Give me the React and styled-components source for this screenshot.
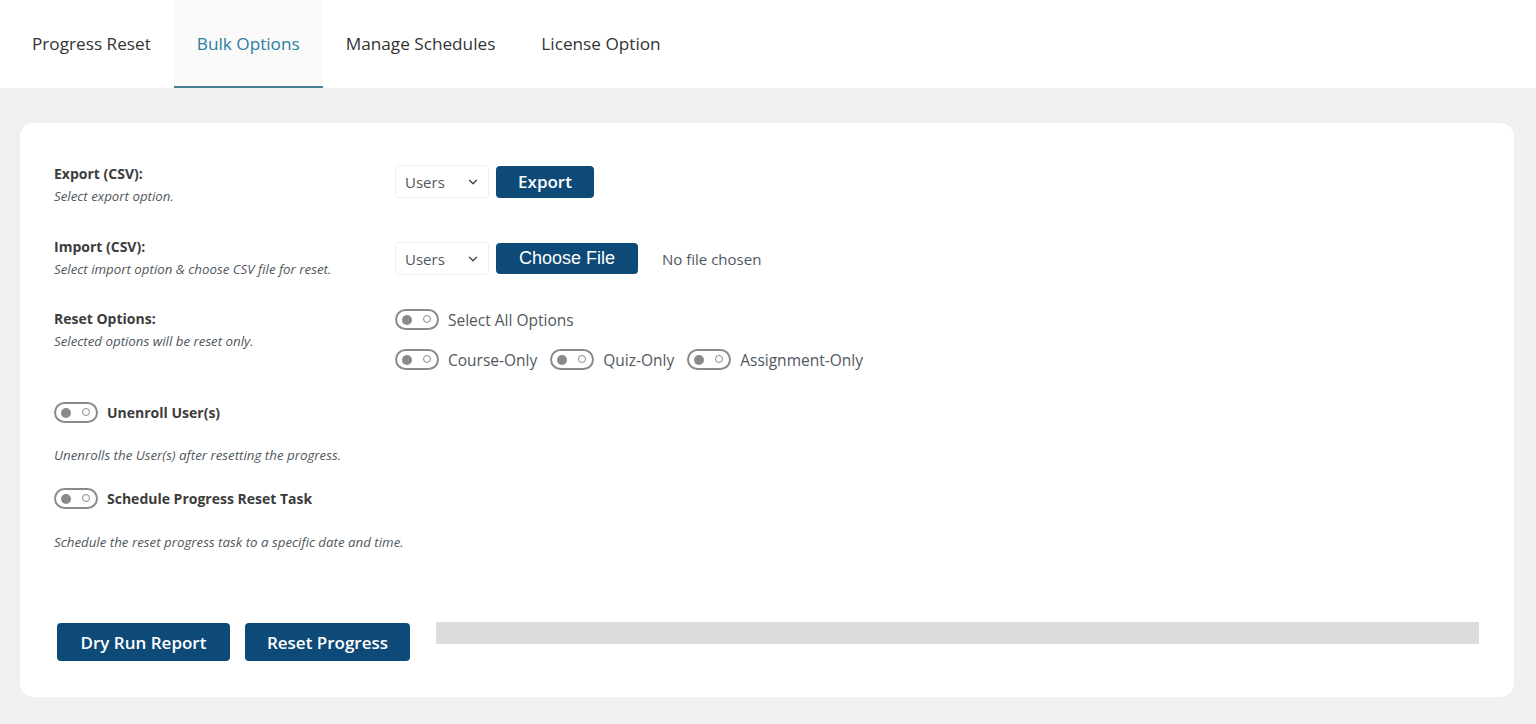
import React from 'react';
import styled, { createGlobalStyle } from 'styled-components';

const GlobalStyle = createGlobalStyle`
  html, body {
    margin: 0;
    padding: 0;
    background: #f0f0f0;
    font-family: "Open Sans", "Noto Sans", Arial, sans-serif;
    color: #3c434a;
  }
`;

const Page = styled.div`
  width: 1536px;
  min-height: 724px;
  background: #f0f0f0;
`;

const TabBar = styled.nav`
  height: 88px;
  background: #fff;
  display: flex;
  align-items: stretch;
  padding-left: 9px;
`;

const Tab = styled.div`
  display: flex;
  align-items: center;
  padding: 0 23px;
  font-size: 17.2px;
  font-weight: 500;
  color: ${p => (p.$active ? '#2b7ca4' : '#333')};
  background: ${p => (p.$active ? '#fafafa' : 'transparent')};
  border-bottom: 2px solid ${p => (p.$active ? '#4a8098' : 'transparent')};
  box-sizing: border-box;
`;

const Card = styled.section`
  margin: 35px 22px 0 20px;
  background: #fff;
  border-radius: 14px;
  padding: 42px 35px 0 34px;
  height: 574px;
  box-sizing: border-box;
`;

const Row = styled.div`
  display: grid;
  grid-template-columns: 341px 1fr;
  align-items: start;
  margin-bottom: ${p => p.$gap || 0}px;
`;

const LabelCol = styled.div`
  padding-top: ${p => p.$top || 0}px;
`;

const Title = styled.div`
  font-size: 14px;
  font-weight: 700;
  color: #3c3c3c;
  line-height: 18px;
`;

const Hint = styled.div`
  font-size: 13.3px;
  font-style: italic;
  color: #50575e;
  line-height: 18px;
  margin-top: 4px;
`;

const Controls = styled.div`
  display: flex;
  align-items: center;
  gap: 7px;
  padding-top: ${p => p.$top || 0}px;
`;

const Select = styled.div`
  width: 94px;
  height: 33px;
  border: 1px solid #f0f0f0;
  border-radius: 3px;
  box-sizing: border-box;
  display: flex;
  align-items: center;
  justify-content: space-between;
  padding: 0 8px 0 9px;
  font-size: 15px;
  color: #50575e;
  background: #fff;
`;

const Button = styled.button`
  background: #0e4a78;
  color: #fff;
  border: none;
  border-radius: 4px;
  font-family: ${p => (p.$arial ? '"Liberation Sans", Arial, sans-serif' : '"Open Sans", sans-serif')};
  font-size: ${p => p.$size || 17}px;
  font-weight: ${p => (p.$arial ? 400 : 600)};
  height: ${p => p.$h || 32}px;
  width: ${p => p.$w}px;
  padding: 0;
  cursor: pointer;
`;

const FileText = styled.span`
  margin-left: 17px;
  font-size: 15px;
  color: #50575e;
`;

const ToggleLine = styled.div`
  display: flex;
  align-items: center;
  height: 21px;
  gap: 9px;
  margin-bottom: ${p => p.$gap || 0}px;
`;

const OptionText = styled.span`
  font-size: 15.5px;
  color: #50575e;
  margin-right: 4px;
`;

const BoldText = styled.span`
  font-size: 14px;
  font-weight: 700;
  color: #3c3c3c;
`;

const ToggleBox = styled.span`
  width: 44px;
  height: 21px;
  border: 2px solid #8a8a8a;
  border-radius: 11px;
  box-sizing: border-box;
  position: relative;
  display: inline-block;
  flex: none;
  &::before {
    content: '';
    position: absolute;
    left: 5px;
    top: 3.5px;
    width: 10px;
    height: 10px;
    border-radius: 50%;
    background: #8a8a8a;
  }
  &::after {
    content: '';
    position: absolute;
    right: 6px;
    top: 3.5px;
    width: 6px;
    height: 6px;
    border-radius: 50%;
    border: 1.5px solid #8a8a8a;
  }
`;

const Block = styled.div`
  margin-bottom: ${p => p.$gap || 0}px;
`;

const Footer = styled.div`
  display: flex;
  align-items: flex-start;
  gap: 15px;
  margin-left: 3px;
`;

const ProgressTrack = styled.div`
  flex: 1;
  height: 22px;
  background: #dcdcdc;
  margin-left: 11px;
  margin-top: -1px;
`;

function Chevron() {
  return (
    <svg width="14" height="14" viewBox="0 0 24 24" fill="none" stroke="#3c434a" strokeWidth="2.2" strokeLinecap="round" strokeLinejoin="round">
      <polyline points="6 9 12 15 18 9" />
    </svg>
  );
}

export default function App() {
  const tabs = ['Progress Reset', 'Bulk Options', 'Manage Schedules', 'License Option'];
  return (
    <Page>
      <GlobalStyle />
      <TabBar>
        {tabs.map(t => (
          <Tab key={t} $active={t === 'Bulk Options'}>{t}</Tab>
        ))}
      </TabBar>
      <Card>
        <Row $gap={33}>
          <LabelCol>
            <Title>Export (CSV):</Title>
            <Hint>Select export option.</Hint>
          </LabelCol>
          <Controls>
            <Select>Users <Chevron /></Select>
            <Button $w={98}>Export</Button>
          </Controls>
        </Row>
        <Row $gap={31}>
          <LabelCol>
            <Title>Import (CSV):</Title>
            <Hint>Select import option &amp; choose CSV file for reset.</Hint>
          </LabelCol>
          <Controls $top={4}>
            <Select>Users <Chevron /></Select>
            <Button $w={142} $h={31} $arial $size={18}>Choose File</Button>
            <FileText>No file chosen</FileText>
          </Controls>
        </Row>
        <Row $gap={32}>
          <LabelCol $top={1}>
            <Title>Reset Options:</Title>
            <Hint>Selected options will be reset only.</Hint>
          </LabelCol>
          <div>
            <ToggleLine $gap={19}>
              <ToggleBox />
              <OptionText>Select All Options</OptionText>
            </ToggleLine>
            <ToggleLine>
              <ToggleBox />
              <OptionText>Course-Only</OptionText>
              <ToggleBox />
              <OptionText>Quiz-Only</OptionText>
              <ToggleBox />
              <OptionText>Assignment-Only</OptionText>
            </ToggleLine>
          </div>
        </Row>
        <Block $gap={24}>
          <ToggleLine $gap={23}>
            <ToggleBox />
            <BoldText>Unenroll User(s)</BoldText>
          </ToggleLine>
          <Hint>Unenrolls the User(s) after resetting the progress.</Hint>
        </Block>
        <Block $gap={72}>
          <ToggleLine $gap={24}>
            <ToggleBox />
            <BoldText>Schedule Progress Reset Task</BoldText>
          </ToggleLine>
          <Hint>Schedule the reset progress task to a specific date and time.</Hint>
        </Block>
        <Footer>
          <Button $w={173} $h={38}>Dry Run Report</Button>
          <Button $w={165} $h={38}>Reset Progress</Button>
          <ProgressTrack />
        </Footer>
      </Card>
    </Page>
  );
}
